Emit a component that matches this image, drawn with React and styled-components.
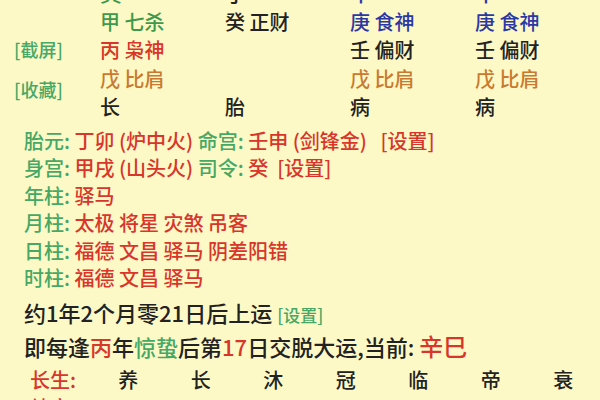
import React from "react";
import styled, { createGlobalStyle } from "styled-components";

const GlobalStyle = createGlobalStyle`
	html, body {
		margin: 0;
		padding: 0;
		background: #fdf9c6;
		overflow: hidden;
	}
	body {
		font-family: "Noto Sans CJK SC", "Noto Sans", sans-serif;
		font-weight: 500;
		color: #222;
	}
`;

const colors = {
	wood: "#3d9a4c",
	fire: "#d8352b",
	earth: "#c97a30",
	metal: "#2c37a6",
	water: "#222222",
	label: "#47a865",
};

const Page = styled.div`
	width: 600px;
	height: 400px;
	overflow: hidden;
	background: #fdf9c6;
`;

const Chart = styled.div`
	display: flex;
	margin-top: -21px;
`;

const SideCol = styled.div`
	width: 100px;
	display: flex;
	flex-direction: column;
	gap: 19px;
	padding: 60px 0 0 14px;
	box-sizing: border-box;
`;

const SideBtn = styled.span`
	font-size: 18px;
	line-height: 21px;
	color: ${colors.label};
`;

const Grid = styled.div`
	display: grid;
	grid-template-columns: repeat(4, 125px);
	grid-auto-rows: 28.5px;
`;

const Cell = styled.div`
	font-size: 20px;
	line-height: 28.5px;
	color: ${(p) => p.$color || colors.water};
	white-space: pre;
`;

const BranchCell = styled(Cell)`
	font-size: 22px;
	line-height: 24px;
`;

const Info = styled.div`
	display: flex;
	flex-direction: column;
	padding: 5px 0 0 24px;
`;

const Line = styled.div`
	font-size: ${(p) => p.$size || 20}px;
	line-height: ${(p) => p.$lh || 27.5}px;
	color: ${(p) => p.$color || colors.water};
	white-space: pre;
	margin-top: ${(p) => p.$mt || 0}px;
`;

const G = styled.span`
	color: ${colors.label};
`;

const R = styled.span`
	color: ${colors.fire};
`;

const Small = styled.span`
	font-size: 17px;
	color: ${(p) => p.$color || colors.label};
`;

const Big = styled.span`
	font-size: 24px;
	color: ${colors.fire};
`;

const StageRow = styled.div`
	display: grid;
	grid-template-columns: 62px repeat(7, 72.5px);
	padding-left: 30px;
	font-size: 20px;
	line-height: 28px;
	margin-top: ${(p) => p.$mt || 0}px;
`;

const StageLabel = styled.span`
	color: ${colors.fire};
`;

const Stage = styled.span`
	text-align: center;
	color: #222;
	font-size: ${(p) => p.$size || 20}px;
`;

const branches = [
	["寅", colors.wood],
	["子", colors.water],
	["申", colors.metal],
	["申", colors.metal],
];

const chart = [
	[
		["甲 七杀", colors.wood],
		["癸 正财", colors.water],
		["庚 食神", colors.metal],
		["庚 食神", colors.metal],
	],
	[
		["丙 枭神", colors.fire],
		["", colors.water],
		["壬 偏财", colors.water],
		["壬 偏财", colors.water],
	],
	[
		["戊 比肩", colors.earth],
		["", colors.water],
		["戊 比肩", colors.earth],
		["戊 比肩", colors.earth],
	],
	[
		["长", colors.water],
		["胎", colors.water],
		["病", colors.water],
		["病", colors.water],
	],
];

const stages = ["养", "长", "沐", "冠", "临", "帝", "衰"];
const nayin = ["大溪水", "城头土", "城头土", "白蜡金", "白蜡金", "杨柳木", "杨柳木"];

export default function App() {
	return (
		<Page>
			<GlobalStyle />
			<Chart>
				<SideCol>
					<SideBtn>[截屏]</SideBtn>
					<SideBtn>[收藏]</SideBtn>
				</SideCol>
				<Grid>
					{branches.map(([text, color], j) => (
						<BranchCell key={`b-${j}`} $color={color}>
							{text}
						</BranchCell>
					))}
					{chart.map((row, i) =>
						row.map(([text, color], j) => (
							<Cell key={`${i}-${j}`} $color={color}>
								{text}
							</Cell>
						))
					)}
				</Grid>
			</Chart>

			<Info>
				<Line>
					<G>胎元: </G>
					<R>丁卯 (炉中火) </R>
					<G>命宫: </G>
					<R>壬申 (剑锋金)   [设置]</R>
				</Line>
				<Line>
					<G>身宫: </G>
					<R>甲戌 (山头火) </R>
					<G>司令: </G>
					<R>癸  [设置]</R>
				</Line>
				<Line>
					<G>年柱: </G>
					<R>驿马</R>
				</Line>
				<Line>
					<G>月柱: </G>
					<R>太极 将星 灾煞 吊客</R>
				</Line>
				<Line>
					<G>日柱: </G>
					<R>福德 文昌 驿马 阴差阳错</R>
				</Line>
				<Line>
					<G>时柱: </G>
					<R>福德 文昌 驿马</R>
				</Line>
				<Line $size={22} $lh={31} $mt={5}>
					约1年2个月零21日后上运 <Small>[设置]</Small>
				</Line>
				<Line $size={22} $lh={31}>
					即每逢<R>丙</R>年<G>惊蛰</G>后第<R>17</R>日交脱大运,当前: <Big>辛巳</Big>
				</Line>
			</Info>

			<StageRow $mt={4}>
				<StageLabel>长生:</StageLabel>
				{stages.map((s, i) => (
					<Stage key={i}>{s}</Stage>
				))}
			</StageRow>
			<StageRow>
				<StageLabel>纳音:</StageLabel>
				{nayin.map((s, i) => (
					<Stage key={i} $size={17}>
						{s}
					</Stage>
				))}
			</StageRow>
		</Page>
	);
}
